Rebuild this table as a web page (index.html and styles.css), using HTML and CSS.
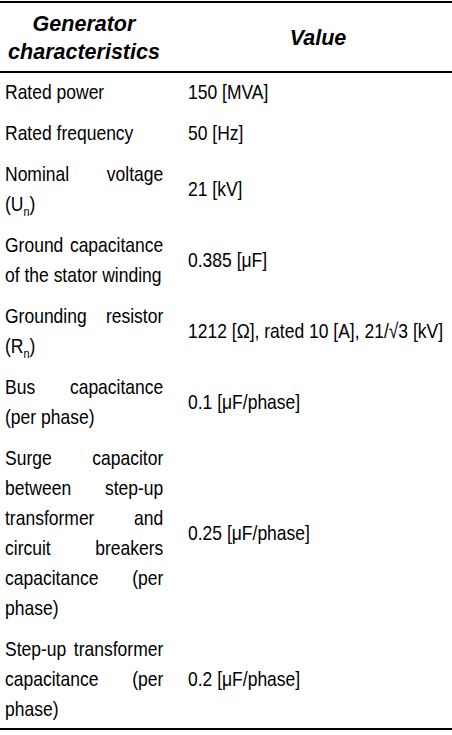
FILE: index.html
```
<!DOCTYPE html>
<html lang="en">
<head>
<meta charset="utf-8">
<title>Generator characteristics</title>
<link rel="stylesheet" href="styles.css">
</head>
<body>
<table class="gen-table">
  <thead>
    <tr>
      <th class="c1">Generator characteristics</th>
      <th class="c2">Value</th>
    </tr>
  </thead>
  <tbody>
    <tr>
      <td class="c1"><span class="in in1">Rated power</span></td>
      <td class="c2"><span class="in in2">150 [MVA]</span></td>
    </tr>
    <tr>
      <td class="c1"><span class="in in1">Rated frequency</span></td>
      <td class="c2"><span class="in in2">50 [Hz]</span></td>
    </tr>
    <tr>
      <td class="c1"><span class="in in1">Nominal voltage (U<sub>n</sub>)</span></td>
      <td class="c2"><span class="in in2">21 [kV]</span></td>
    </tr>
    <tr>
      <td class="c1"><span class="in in1">Ground capacitance of the stator winding</span></td>
      <td class="c2"><span class="in in2">0.385 [μF]</span></td>
    </tr>
    <tr>
      <td class="c1"><span class="in in1">Grounding resistor (R<sub>n</sub>)</span></td>
      <td class="c2"><span class="in in2">1212 [Ω], rated 10 [A], 21/√3 [kV]</span></td>
    </tr>
    <tr>
      <td class="c1"><span class="in in1">Bus capacitance (per phase)</span></td>
      <td class="c2"><span class="in in2">0.1 [μF/phase]</span></td>
    </tr>
    <tr>
      <td class="c1"><span class="in in1">Surge capacitor between step-up transformer and circuit breakers capacitance (per phase)</span></td>
      <td class="c2"><span class="in in2">0.25 [μF/phase]</span></td>
    </tr>
    <tr class="last-row">
      <td class="c1"><span class="in in1">Step-up transformer capacitance (per phase)</span></td>
      <td class="c2"><span class="in in2">0.2 [μF/phase]</span></td>
    </tr>
  </tbody>
</table>
</body>
</html>
```
FILE: styles.css
```
html, body {
  margin: 0;
  padding: 0;
  background: #fff;
}

.gen-table {
  margin-top: 1px;
  width: 452px;
  border-collapse: collapse;
  table-layout: fixed;
  color: #000;
  border-top: 2px solid #000;
  border-bottom: 2px solid #000;
}

.gen-table thead tr {
  border-bottom: 2px solid #000;
}

.gen-table th {
  font-family: "Liberation Sans", Arial, sans-serif;
  font-weight: bold;
  font-style: italic;
  font-size: 21.5px;
  line-height: 28px;
  text-align: center;
  vertical-align: middle;
  padding-top: 7px;
  padding-bottom: 5px;
}

.gen-table td {
  font-family: "Liberation Sans", Arial, sans-serif;
  font-size: 21px;
  line-height: 30px;
  padding-top: 4px;
  padding-bottom: 7px;
  vertical-align: middle;
  overflow: visible;
}

.gen-table .last-row td {
  padding-bottom: 4px;
}

.gen-table .c1 {
  width: 158px;
  padding-left: 5px;
  padding-right: 12px;
}

.gen-table .c2 {
  padding-left: 13px;
  padding-right: 4px;
}

/* condensed text: the reference uses a narrow face */
.in {
  display: block;
  transform: scaleX(0.833);
  transform-origin: left center;
}

.in1 {
  width: 190px;
  text-align: justify;
}

.in2 {
  width: 312px;
  white-space: nowrap;
}

.gen-table sub {
  font-size: 13px;
  line-height: 0;
  vertical-align: -5px;
}
```
